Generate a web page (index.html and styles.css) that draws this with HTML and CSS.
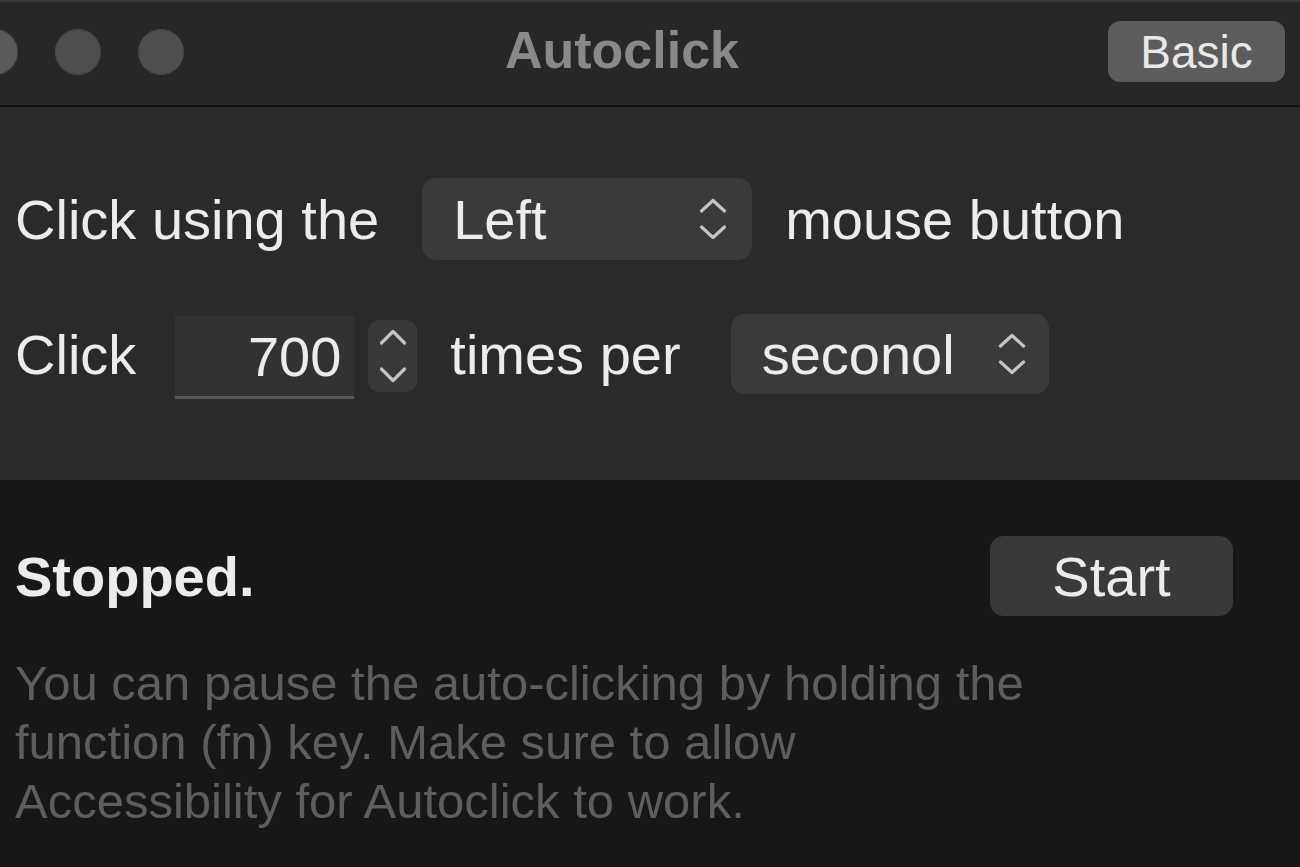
FILE: index.html
```html
<!DOCTYPE html>
<html lang="en">
<head>
<meta charset="utf-8">
<title>Autoclick</title>
<link rel="stylesheet" href="styles.css">
</head>
<body>
<div class="window">
  <header class="titlebar">
    <div class="lights">
      <span class="light light-close"></span>
      <span class="light"></span>
      <span class="light"></span>
    </div>
    <div class="title">Autoclick</div>
    <button class="mode-btn">Basic</button>
  </header>

  <section class="controls">
    <div class="row row-1">
      <span class="label">Click using the</span>
      <div class="select select-button">
        <span class="select-text">Left</span>
        <svg class="chev" viewBox="0 0 30 44" width="30" height="44"><path d="M3.5 14 L15 3.5 L26.5 14 M3.5 30 L15 40.5 L26.5 30" fill="none" stroke="#c4c4c4" stroke-width="3.2" stroke-linecap="round" stroke-linejoin="round"/></svg>
      </div>
      <span class="label label-mouse">mouse button</span>
    </div>
    <div class="row row-2">
      <span class="label label-click">Click</span>
      <div class="numfield">700</div>
      <div class="stepper">
        <svg viewBox="0 0 30 72" width="30" height="72"><path d="M3.5 23 L15 11.5 L26.5 23 M3.5 49 L15 60.5 L26.5 49" fill="none" stroke="#c4c4c4" stroke-width="3.2" stroke-linecap="round" stroke-linejoin="round"/></svg>
      </div>
      <span class="label label-times">times per</span>
      <div class="select select-unit">
        <span class="select-text">seconol</span>
        <svg class="chev" viewBox="0 0 30 44" width="30" height="44"><path d="M3.5 14 L15 3.5 L26.5 14 M3.5 30 L15 40.5 L26.5 30" fill="none" stroke="#c4c4c4" stroke-width="3.2" stroke-linecap="round" stroke-linejoin="round"/></svg>
      </div>
    </div>
  </section>

  <section class="status">
    <div class="status-row">
      <span class="status-text">Stopped.</span>
      <button class="start-btn">Start</button>
    </div>
    <p class="hint">You can pause the auto-clicking by holding the<br>function (fn) key. Make sure to allow<br>Accessibility for Autoclick to work.</p>
  </section>
</div>
</body>
</html>
```

FILE: styles.css
```css
* { box-sizing: border-box; }
html, body {
  margin: 0;
  padding: 0;
  width: 1300px;
  height: 867px;
  overflow: hidden;
  background: #171717;
  font-family: "Liberation Sans", Arial, sans-serif;
}
.window {
  display: flex;
  flex-direction: column;
  height: 867px;
}
.titlebar {
  height: 107px;
  background: #272727;
  border-top: 2px solid #3a3a3a;
  border-bottom: 2px solid #121212;
  display: flex;
  align-items: center;
  position: relative;
  padding: 0 15px 4px 0;
}
.lights {
  display: flex;
  gap: 37px;
  margin-left: -28px;
}
.light {
  width: 46px;
  height: 46px;
  border-radius: 50%;
  background: #4e4e4e;
  box-shadow: inset 0 0 0 1px #444;
}
.light-close { background: #5a5a5a; }
.title {
  position: absolute;
  left: 0;
  right: 56px;
  top: 20px;
  text-align: center;
  font-size: 52px;
  line-height: 56px;
  font-weight: 700;
  color: #898989;
  pointer-events: none;
}
.mode-btn {
  margin-left: auto;
  width: 177px;
  height: 61px;
  border: none;
  border-radius: 12px;
  background: #5c5c5c;
  color: #e8e8e8;
  font-family: inherit;
  font-size: 46px;
  padding: 0;
}
.controls {
  height: 373px;
  background: #2a2a2a;
  padding: 71px 0 0 15px;
  display: flex;
  flex-direction: column;
  gap: 53px;
}
.row {
  display: flex;
  align-items: center;
  height: 82px;
}
.label {
  font-size: 56px;
  color: #ececec;
  white-space: nowrap;
}
.select {
  display: flex;
  align-items: center;
  justify-content: space-between;
  height: 82px;
  border-radius: 14px;
  background: #3a3a3a;
  color: #ececec;
  font-size: 56px;
}
.select-button {
  width: 330px;
  margin-left: 43px;
  padding: 0 24px 0 31px;
}
.label-mouse { margin-left: 33px; }
.select-unit {
  width: 318px;
  height: 80px;
  margin-left: 50px;
  padding: 0 22px 0 31px;
}
.numfield {
  width: 179px;
  height: 83px;
  margin-left: 39px;
  margin-top: 6px;
  background: #323232;
  border-bottom: 3px solid #555;
  color: #ececec;
  font-size: 56px;
  text-align: right;
  padding: 5px 13px 0 0;
  line-height: 72px;
}
.stepper {
  width: 49px;
  height: 72px;
  margin-left: 14px;
  margin-top: 4px;
  border-radius: 11px;
  background: #393939;
  display: flex;
  align-items: center;
  justify-content: center;
}
.label-times { margin-left: 33px; }
.status {
  flex: 1;
  background: #171717;
  padding: 56px 0 0 15px;
}
.status-row {
  display: flex;
  align-items: center;
  height: 80px;
}
.status-text {
  font-size: 56px;
  font-weight: 700;
  color: #ececec;
}
.start-btn {
  margin-left: auto;
  margin-right: 67px;
  width: 243px;
  height: 80px;
  border: none;
  border-radius: 14px;
  background: #393939;
  color: #ececec;
  font-family: inherit;
  font-size: 56px;
  padding: 0;
}
.hint {
  margin: 38px 0 0 0;
  font-size: 49px;
  line-height: 59px;
  color: #5e5e5e;
}
```
